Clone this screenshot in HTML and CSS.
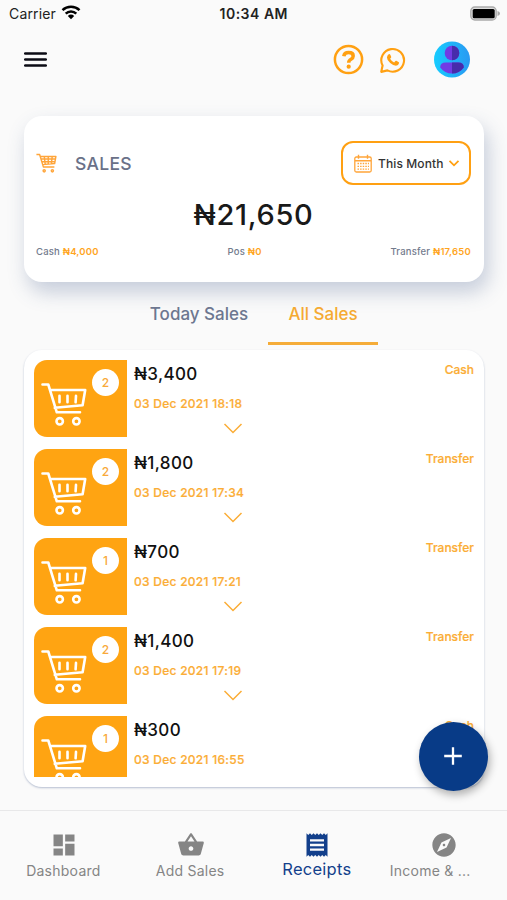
FILE: index.html
```html
<!DOCTYPE html>
<html lang="en">
<head>
<meta charset="utf-8">
<title>Sales receipts</title>
<link rel="stylesheet" href="styles.css">
</head>
<body>
<svg width="0" height="0" class="defs">
  <symbol id="cart" viewBox="0 0 93 77">
    <g fill="none" stroke="currentColor" stroke-width="2.6" stroke-linecap="round" stroke-linejoin="round">
      <path d="M8.500 24.500H14.300L22.800 52.300H46M16.500 30H51.200L48.600 45.300L20.800 47.800"/>
      <path d="M25.500 35.800V42.300M33.500 35.800V42.300M42 35.800L41.600 42.300"/>
      <circle cx="25.700" cy="61.300" r="3.200"/><circle cx="42.400" cy="61.300" r="3.200"/>
    </g>
  </symbol>
  <symbol id="down" viewBox="0 0 20 12"><path d="M1.500 1L10 9.500L18.500 1" fill="none" stroke="currentColor" stroke-width="1.500"/></symbol>
</svg>
<div class="status">
  <span class="carrier">Carrier</span>
  <svg class="wifi" width="20" height="15" viewBox="0 0 20 15"><g fill="none" stroke="#000" stroke-width="2.500"><path d="M1.500 5.200a12.300 12.300 0 0 1 17 0"/><path d="M4.700 8.700a7.600 7.600 0 0 1 10.600 0"/></g><path d="M6.800 11a4.800 4.800 0 0 1 6.400 0L10 14.200z"/></svg>
  <span class="time">10:34 AM</span>
  <svg class="battery" width="31" height="16" viewBox="0 0 31 16"><rect x=".8" y="1" width="25.400" height="13" rx="4" fill="#ddd" stroke="#aaa" stroke-width="1.300"/><rect x="2.700" y="3" width="22" height="9.200" rx="1.500"/><path d="M27.500 5q2.500.8 2.500 2.500t-2.500 2.500z" fill="#aaa"/></svg>
</div>
<header class="top">
  <svg width="23" height="17" viewBox="0 0 23 17"><path d="M1.200 2.500H21.800M1.200 8.600H21.800M1.200 14.600H21.800" stroke="#0b0b14" stroke-width="2.500" stroke-linecap="round"/></svg>
  <div class="actions">
    <svg width="31" height="31" viewBox="0 0 31 31" fill="none" stroke="#ffa012"><circle cx="15.500" cy="15.500" r="13.600" stroke-width="2.500"/><path d="M10.800 12.200q.4-3.600 4.900-3.600 4.500 0 4.500 3.300 0 2-2.200 3.300-2.300 1.200-2.300 3.600" stroke-width="3.500"/><circle cx="15.700" cy="22.700" r="2.100" fill="#ffa012" stroke="none"/></svg>
    <svg class="whatsapp" width="26" height="26" viewBox="0 0 27 27"><path d="M1.300 25.800L2.700 19.300A11.800 11.800 0 1 1 7.700 24.300z" fill="none" stroke="#ffa012" stroke-width="2.200" stroke-linejoin="round"/><path d="M9.300 7.200Q10.200 7 10.700 8l.9 2.100q.2.600-.2 1.100l-.9 1.100q1.500 2.600 4.200 3.800l1.300-1.500q.4-.5 1-.2l2.200 1.100q.8.400.6 1.200-.6 2.800-3.200 2.900-2.600 0-6-2.900-3.400-3.200-3.400-5.900Q7.400 8.500 9.300 7.200z" fill="#ffa012"/></svg>
    <svg class="avatar" width="36" height="37" viewBox="0 -.5 36 37"><defs><linearGradient id="sky"><stop stop-color="#16ccff"/><stop offset="1" stop-color="#2999f2"/></linearGradient></defs><circle cx="18" cy="18" r="18" fill="url(#sky)"/><circle cx="18" cy="11.500" r="7.300" fill="#713be4"/><path d="M6.200 26q0-5 5.500-5h12.600q5.500 0 5.500 5-4.500 6-11.800 6t-11.800-6z" fill="#713be4"/><path d="M18 4.200a7.300 7.300 0 0 1 0 14.600zM18 21h6.300q5.500 0 5.500 5-4.500 6-11.800 6z" fill="#472cab"/></svg>
  </div>
</header>
<section class="summary">
  <div class="summary-head">
    <svg class="mini-cart" width="21" height="20" viewBox="6 21 48 46" preserveAspectRatio="none"><g fill="none" stroke="#ffa53a" stroke-width="3.300" stroke-linejoin="round"><path d="M7 24.500H14.300L22.800 53H48M15.500 29H51.500L48.600 45.300L20.800 47.800M18 35H50M20 41H49M25 30L27 47M34 30V47M43 30L41 46"/><circle cx="24.700" cy="62" r="2.500"/><circle cx="43.400" cy="62" r="2.500"/></g></svg>
    <h1>SALES</h1>
    <div class="period">
      <svg width="18" height="19" viewBox="0 0 18 19" fill="none" stroke="#ffa53a"><rect x=".8" y="3" width="16.400" height="15" rx="1.500" stroke-width="1.300"/><path d="M1 6.800H17M4.500 .8V4.800M13.500 .8V4.800" stroke-width="1.400"/><path d="M3.500 9.500H15M3.500 12.300H15M3.500 15.200H15" stroke-width="1.300" stroke-dasharray="1.500 1.100"/></svg>
      <span>This Month</span>
      <svg class="chev" width="12" height="8" viewBox="0 0 12 8"><path d="M1.500 1.800L6 6.300L10.500 1.800" fill="none" stroke="#ffa012" stroke-width="1.800"/></svg>
    </div>
  </div>
  <div class="total"><span>₦21,650</span></div>
  <div class="split"><span class="cash">Cash <b>₦4,000</b></span><span class="pos">Pos <b>₦0</b></span><span class="transfer">Transfer <b>₦17,650</b></span></div>
</section>
<nav class="tabs"><span class="tab today">Today Sales</span><span class="tab active">All Sales</span></nav>
<main class="list"><div class="rows">
  <article class="row"><div class="thumb"><svg><use href="#cart"/></svg><i>2</i></div><div class="info"><h2>₦3,400</h2><p>03 Dec 2021 18:18</p><svg><use href="#down"/></svg></div><span class="kind">Cash</span></article>
  <article class="row"><div class="thumb"><svg><use href="#cart"/></svg><i>2</i></div><div class="info"><h2>₦1,800</h2><p>03 Dec 2021 17:34</p><svg><use href="#down"/></svg></div><span class="kind">Transfer</span></article>
  <article class="row"><div class="thumb"><svg><use href="#cart"/></svg><i>1</i></div><div class="info"><h2>₦700</h2><p>03 Dec 2021 17:21</p><svg><use href="#down"/></svg></div><span class="kind">Transfer</span></article>
  <article class="row"><div class="thumb"><svg><use href="#cart"/></svg><i>2</i></div><div class="info"><h2>₦1,400</h2><p>03 Dec 2021 17:19</p><svg><use href="#down"/></svg></div><span class="kind">Transfer</span></article>
  <article class="row"><div class="thumb"><svg><use href="#cart"/></svg><i>1</i></div><div class="info"><h2>₦300</h2><p>03 Dec 2021 16:55</p><svg><use href="#down"/></svg></div><span class="kind">Cash</span></article>
</div></main>
<button class="fab" aria-label="Add"><svg width="20" height="20" viewBox="0 0 20 20"><path d="M10 1.200V18.800M1.200 10H18.800" stroke="#fff" stroke-width="2.300"/></svg></button>
<footer class="bar">
  <a class="item"><svg viewBox="0 0 24 24"><path d="M3 13h8V3H3v10zm0 8h8v-6H3v6zm10 0h8V11h-8v10zm0-18v6h8V3h-8z"/></svg><span>Dashboard</span></a>
  <a class="item"><svg viewBox="0 0 24 24"><path d="M17.210 9l-4.380-6.560c-.19-.28-.51-.42-.83-.42-.32 0-.64.14-.83.430L6.790 9H2c-.55 0-1 .45-1 1 0 .09.010.18.040.270l2.540 9.270c.23.840 1 1.460 1.920 1.460h13c.92 0 1.690-.62 1.930-1.460l2.540-9.270L23 10c0-.55-.45-1-1-1h-4.790zM9 9l3-4.400L15 9H9zm3 8c-1.100 0-2-.9-2-2s.9-2 2-2 2 .9 2 2-.9 2-2 2z"/></svg><span>Add Sales</span></a>
  <a class="item current"><svg viewBox="0 0 24 24"><path d="M18 17H6v-2h12v2zm0-4H6v-2h12v2zm0-4H6V7h12v2zM3 22l1.500-1.500L6 22l1.500-1.500L9 22l1.500-1.500L12 22l1.500-1.500L15 22l1.500-1.500L18 22l1.500-1.500L21 22V2l-1.500 1.500L18 2l-1.500 1.500L15 2l-1.500 1.500L12 2l-1.500 1.500L9 2 7.500 3.500 6 2 4.500 3.500 3 2v20z"/></svg><span>Receipts</span></a>
  <a class="item"><svg viewBox="0 0 24 24"><path d="M12 10.900c-.61 0-1.100.49-1.100 1.100s.49 1.100 1.100 1.100c.61 0 1.100-.49 1.100-1.100s-.49-1.100-1.100-1.100zM12 2C6.480 2 2 6.480 2 12s4.480 10 10 10 10-4.480 10-10S17.520 2 12 2zm2.190 12.190L6 18l3.810-8.190L18 6l-3.810 8.190z"/></svg><span class="cut">Income &amp; ...</span></a>
</footer>
</body>
</html>
```
FILE: styles.css
```css
* { box-sizing: border-box; }
body { margin: 0; width: 507px; height: 900px; overflow: hidden; background: #fafafa; font-family: Inter, "Noto Sans", sans-serif; position: relative; display: flex; flex-direction: column; }
svg { display: block; flex: none; }
span, h1, h2, p { white-space: nowrap; }
.defs { position: absolute; }
.status { height: 28px; flex: none; display: grid; grid-template-columns: 52px 1fr 86px 1fr 31px; align-items: center; padding: 0 6px 0 9px; color: #222; font-size: 14px; }
.carrier { letter-spacing: .15px; margin-top: -1px; }
.wifi { margin: -3px 0 0 0; }
.time { font-weight: 600; letter-spacing: .5px; grid-column: 3; margin: -1px 0 0 -3px; }
.battery { grid-column: 5; margin-top: -1px; }
.top { height: 88px; flex: none; padding: 13px 37px 0 24px; display: flex; justify-content: space-between; align-items: flex-start; }
.top > svg { margin-top: 10px; }
.actions { display: flex; }
.actions > svg:first-child { margin-top: 3px; }
.whatsapp { margin: 6px 28px 0 16px; }
.summary { margin: 0 23px 0 24px; height: 166px; flex: none; border-radius: 18px; background: #fff; padding: 25px 13px 0 12px; box-shadow: 4px 10px 20px rgba(62,86,136,.28); }
.summary-head { display: flex; align-items: center; height: 44px; }
h1 { margin: 0 auto 0 18px; font-size: 17.5px; font-weight: 500; color: #6a7188; letter-spacing: .3px; }
.period { width: 130px; height: 44px; border: 2px solid #ffa012; border-radius: 12px; display: flex; align-items: center; padding-left: 11px; font-size: 12px; font-weight: 500; color: #333; letter-spacing: .1px; }
.period span { margin: 0 5px 0 6px; }
.total { margin-top: 7px; height: 46px; line-height: 46px; text-align: center; font-size: 29px; font-weight: 500; color: #191919; letter-spacing: .7px; }
.split { display: flex; justify-content: space-between; margin-top: 6px; height: 16px; line-height: 16px; font-size: 9.5px; font-weight: 500; color: #737b8d; letter-spacing: .2px; }
.split b { font-weight: 600; color: #ffa51e; }
.tabs { display: flex; height: 68px; flex: none; margin-left: 130px; padding-top: 13px; }
.tab { height: 50px; line-height: 39px; text-align: center; font-size: 17px; font-weight: 500; color: #6d7790; letter-spacing: 0; }
.today { width: 138px; }
.active { width: 110px; color: #f5aa32; border-bottom: 3px solid #f5ac38; }
.list { margin: 0 23px 0 24px; height: 437px; flex: none; background: #fff; border-radius: 18px; padding: 10px; box-shadow: 0 1px 2px rgba(62,86,136,.36); }
.rows { height: 417px; overflow: hidden; }
.row { display: flex; height: 77px; margin-bottom: 12px; color: #fbad36; }
.thumb { width: 93px; height: 77px; border-radius: 13px 0 0 13px; background: #ffa412; color: #fff; position: relative; flex: none; }
.thumb svg { width: 93px; height: 77px; }
.thumb i { position: absolute; left: 58px; top: 9px; width: 27px; height: 27px; border-radius: 50%; background: #fff; color: #f8a93a; font: 500 12px/27px Inter; text-align: center; }
.info { padding-left: 7px; }
.info h2 { margin: 0; height: 27px; line-height: 28px; font-size: 17px; font-weight: 500; color: #111; letter-spacing: .35px; }
.info p { margin: 8px 0 0; height: 18px; line-height: 18px; font-size: 12px; font-weight: 500; letter-spacing: .27px; -webkit-text-stroke: .2px currentColor; }
.info svg { width: 20px; height: 12px; margin: 10px 0 0 89px; }
.kind { margin-left: auto; font-size: 12px; line-height: 20px; font-weight: 500; letter-spacing: 0; -webkit-text-stroke: .2px currentColor; }
.fab { position: absolute; left: 419px; top: 722px; width: 69px; height: 69px; border: 0; border-radius: 50%; background: #083b87; display: grid; place-items: center; box-shadow: 2px 4px 9px rgba(0,0,0,.3); }
.fab svg { margin: -1px 0 0 -1px; }
.bar { margin-top: auto; height: 90px; flex: none; border-top: 1px solid #e8e8e9; display: grid; grid-template-columns: repeat(4, 1fr); }
.item { display: flex; flex-direction: column; align-items: center; padding-top: 19px; color: #858585; font-size: 14px; }
.item svg { width: 28px; height: 28px; margin: 1px 0 1px 1px; fill: currentColor; }
.item span { line-height: 20px; margin-top: 1px; letter-spacing: .25px; }
.current { color: #123f8b; font-size: 16.5px; }
.item.current span { margin-top: -1px; }
.item .cut { margin-right: 27px; }
```
